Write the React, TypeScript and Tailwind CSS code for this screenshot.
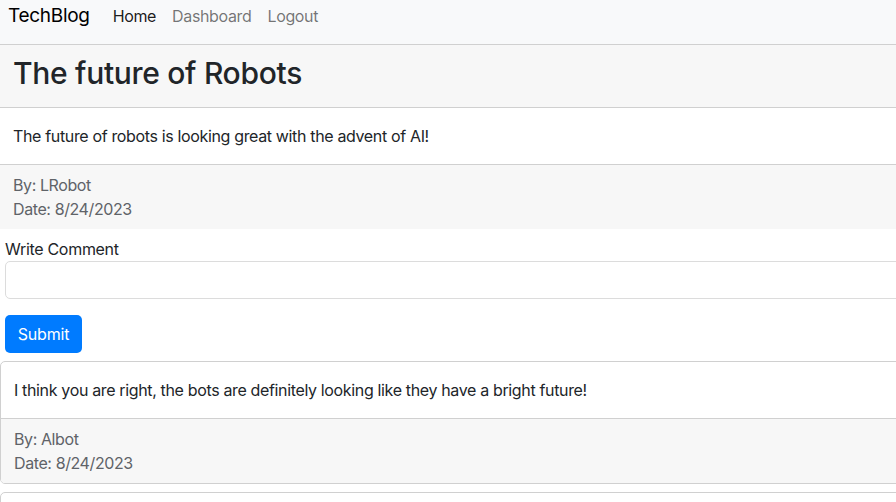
export default function App() {
  const font = { fontFamily: 'Inter, "Noto Sans", sans-serif' };
  return (
    <div className="w-[896px] h-[502px] overflow-hidden bg-white text-[#212529]" style={font}>
      <nav className="h-[44px] bg-[#f8f9fa] flex items-start pt-[3px] pl-[8px]">
        <span className="text-[19px] leading-[26px] text-black tracking-[-0.3px]">TechBlog</span>
        <div className="flex ml-[15px] text-[16px] leading-[26px] tracking-[-0.35px]">
          <span className="px-2 text-black/90">Home</span>
          <span className="px-2 text-black/55">Dashboard</span>
          <span className="px-2 text-black/55">Logout</span>
        </div>
      </nav>
      <div className="w-[920px] border-t border-[#d0d0d0]">
        <div className="h-[63px] bg-[#f7f7f7] border-b border-[#d0d0d0] flex items-center px-[13px] pb-[6px]">
          <h2 className="text-[30px] font-medium leading-[36px] tracking-[-0.3px]">The future of Robots</h2>
        </div>
        <div className="py-4 px-[13px] text-[16px] leading-[24px] border-b border-[#d0d0d0] tracking-[-0.35px]">
          The future of robots is looking great with the advent of AI!
        </div>
        <div className="bg-[#f7f7f7] py-2 px-[13px] text-[16px] leading-[24px] text-[#5f6368] tracking-[-0.4px]">
          <div>By: LRobot</div>
          <div>Date: 8/24/2023</div>
        </div>
      </div>
      <form className="px-[5px] pt-[8px]">
        <label className="block text-[16px] leading-[24px] tracking-[-0.3px]">Write Comment</label>
        <div className="w-[920px] h-[38px] border border-[#dcdcdc] rounded-[5px] bg-white"></div>
        <button type="button" className="mt-[16px] w-[77px] h-[38px] rounded-[5px] bg-[#007bff] text-white text-[16px] leading-[24px] tracking-[-0.2px]">
          Submit
        </button>
      </form>
      <div className="w-[920px] mt-[8px] border border-[#d0d0d0] rounded-[5px] overflow-hidden">
        <div className="py-4 px-[13px] text-[16px] leading-[24px] border-b border-[#d0d0d0] tracking-[-0.35px]">
          I think you are right, the bots are definitely looking like they have a bright future!
        </div>
        <div className="bg-[#f7f7f7] py-2 px-[13px] text-[16px] leading-[24px] text-[#5f6368] tracking-[-0.4px]">
          <div>By: Albot</div>
          <div>Date: 8/24/2023</div>
        </div>
      </div>
      <div className="w-[920px] mt-[8px] h-[40px] border border-[#d0d0d0] rounded-[5px]"></div>
    </div>
  );
}
